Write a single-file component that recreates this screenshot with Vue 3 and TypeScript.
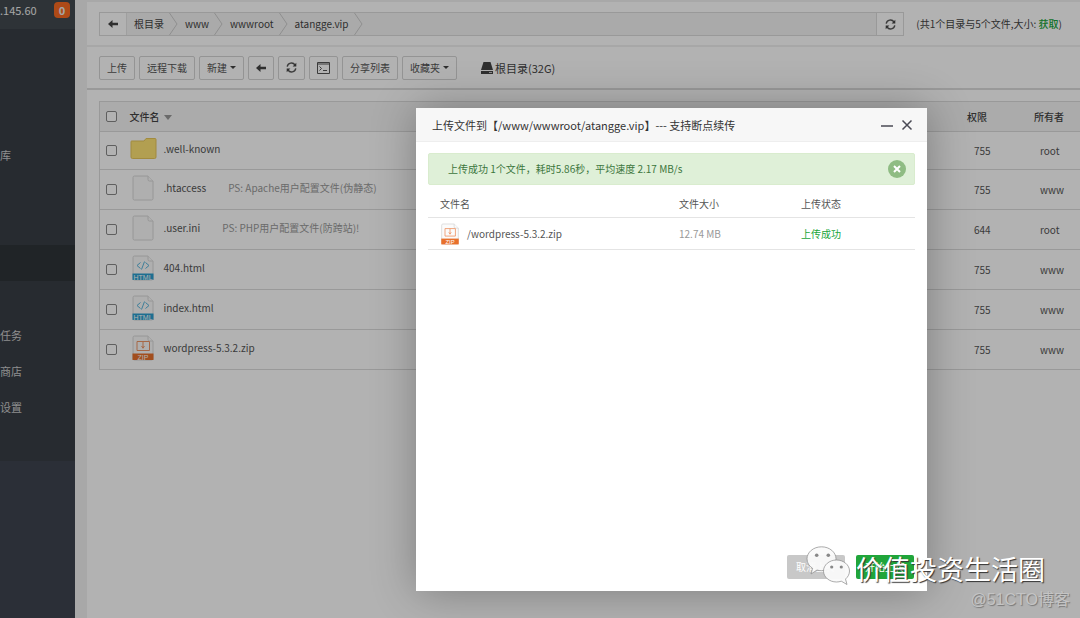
<script setup lang="ts">
import { ref } from 'vue'

type Kind = 'folder' | 'blank' | 'html' | 'zip'
interface Entry {
  name: string
  kind: Kind
  note?: string
  mode: string
  owner: string
}

const menu = ['', '', '', '库', '', '', '', '', '任务', '商店', '设置', '']
const activeItem = 6

const crumbs = ['根目录', 'www', 'wwwroot', 'atangge.vip']

const entries: Entry[] = [
  { name: '.well-known', kind: 'folder', mode: '755', owner: 'root' },
  { name: '.htaccess', kind: 'blank', note: 'PS: Apache用户配置文件(伪静态)', mode: '755', owner: 'www' },
  { name: '.user.ini', kind: 'blank', note: 'PS: PHP用户配置文件(防跨站)!', mode: '644', owner: 'root' },
  { name: '404.html', kind: 'html', mode: '755', owner: 'www' },
  { name: 'index.html', kind: 'html', mode: '755', owner: 'www' },
  { name: 'wordpress-5.3.2.zip', kind: 'zip', mode: '755', owner: 'www' },
]
const selected = ref<string[]>([])
</script>

<template>
  <div class="app">
    <aside class="sidebar">
      <div class="server"><span>.145.60</span><b class="badge">0</b></div>
      <nav class="menu">
        <a v-for="(item, i) in menu" :key="i" href="#" :class="{ active: i === activeItem }">{{ item }}</a>
      </nav>
    </aside>

    <main class="content">
      <div class="pathbar">
        <div class="path">
          <button class="path-btn back" aria-label="返回">
            <svg width="10" height="8" viewBox="0 0 10 8"><path d="M0 4 4.500 0v2.700H10v2.600H4.500V8z" /></svg>
          </button>
          <div class="crumbs">
            <a v-for="c in crumbs" :key="c" href="#">
              <span>{{ c }}</span>
              <svg width="9" height="22" viewBox="0 0 9 22"><path d="M.5 0 8 11 .5 22" /></svg>
            </a>
          </div>
          <button class="path-btn refresh" aria-label="刷新">
            <svg width="11" height="11" viewBox="0 0 11 11">
              <path class="arc" d="M1.200 4.600A4.300 4.300 0 0 1 9 3M9.800 6.400A4.300 4.300 0 0 1 2 8" />
              <path d="M10.300.7v3.700H6.600zM.7 10.300V6.600h3.700z" />
            </svg>
          </button>
        </div>
        <p class="summary">(共1个目录与5个文件,大小: <a href="#">获取</a>)</p>
      </div>

      <div class="toolbar">
        <button>上传</button>
        <button>远程下载</button>
        <button>新建<i class="caret"></i></button>
        <button aria-label="后退">
          <svg width="10" height="8" viewBox="0 0 10 8"><path d="M0 4 4.500 0v2.700H10v2.600H4.500V8z" /></svg>
        </button>
        <button aria-label="重新加载">
          <svg width="11" height="11" viewBox="0 0 11 11">
            <path class="arc" d="M1.200 4.600A4.300 4.300 0 0 1 9 3M9.800 6.400A4.300 4.300 0 0 1 2 8" />
            <path d="M10.300.7v3.700H6.600zM.7 10.300V6.600h3.700z" />
          </svg>
        </button>
        <button aria-label="终端">
          <svg width="13" height="12" viewBox="0 0 13 12">
            <path class="line" d="M.5.5h12v11H.5zM.5 2h12M2.500 4.500l2 2-2 2M6 8.500h4" />
          </svg>
        </button>
        <button>分享列表</button>
        <button>收藏夹<i class="caret"></i></button>
        <a class="disk" href="#">
          <svg width="12" height="12" viewBox="0 0 12 12">
            <path d="M2.500 0h7L12 8H0zM0 9h12v3H0z" />
            <path class="light" d="M8 10.500h3" />
          </svg>
          <span>根目录(32G)</span>
        </a>
      </div>

      <div class="files">
        <table>
          <thead>
            <tr>
              <th class="check"><input type="checkbox" aria-label="全选" /></th>
              <th>文件名<i class="sort"></i></th>
              <th class="mode">权限</th>
              <th class="owner">所有者</th>
            </tr>
          </thead>
          <tbody>
            <tr v-for="e in entries" :key="e.name">
              <td class="check"><input v-model="selected" type="checkbox" :value="e.name" :aria-label="e.name" /></td>
              <td>
                <div class="name">
                  <svg v-if="e.kind === 'folder'" width="28" height="26" viewBox="0 0 28 26">
                    <path class="folder" d="M1.500 5h12.500l2-2.500h9q1 0 1 1V21q0 1.500-1.500 1.500h-22Q1 22.500 1 21V6q0-1 .5-1z" />
                  </svg>
                  <svg v-else width="28" height="26" viewBox="0 0 28 26">
                    <path class="sheet" d="M4.500 1H18l5 5v17.500q0 1.500-1.500 1.500h-17Q3 25 3 23.500v-21Q3 1 4.500 1z" />
                    <path class="sheet" d="M18 1v3.500Q18 6 19.500 6H23" />
                    <template v-if="e.kind === 'html'">
                      <path class="code" d="M10.500 7.500 7 10.500l3.500 3M15.500 7.500l3.500 3-3.500 3M14.500 6.500l-3 8" />
                      <path class="blue" d="M2.500 18.500h21V25h-21z" />
                      <text x="13" y="24.500">HTML</text>
                    </template>
                    <template v-if="e.kind === 'zip'">
                      <path class="box" d="M7 6.500h12.500v9H7zM13 6.500v7M11.500 11l1.500 2 1.500-2" />
                      <path class="orange" d="M2.500 18.500h21V25h-21z" />
                      <text x="13" y="24.500">ZIP</text>
                    </template>
                  </svg>
                  <a href="#">{{ e.name }}</a>
                  <span v-if="e.note" class="note">{{ e.note }}</span>
                </div>
              </td>
              <td class="mode">{{ e.mode }}</td>
              <td class="owner">{{ e.owner }}</td>
            </tr>
          </tbody>
        </table>
      </div>
    </main>

    <div class="shade"></div>

    <section class="dialog" role="dialog" aria-label="上传文件">
      <header>
        <h2>上传文件到【/www/wwwroot/atangge.vip】--- 支持断点续传</h2>
        <button aria-label="最小化">
          <svg width="12" height="12" viewBox="0 0 12 12"><path d="M0 7h12" /></svg>
        </button>
        <button aria-label="关闭">
          <svg width="12" height="12" viewBox="0 0 12 12"><path d="m1.500 1.500 9 9M10.500 1.500l-9 9" /></svg>
        </button>
      </header>
      <div class="dialog-body">
        <div class="alert">
          <span>上传成功 1个文件，耗时5.86秒，平均速度 2.17 MB/s</span>
          <button aria-label="关闭提示">
            <svg width="18" height="18" viewBox="0 0 18 18">
              <circle cx="9" cy="9" r="9" /><path d="m6 6 6 6M12 6l-6 6" />
            </svg>
          </button>
        </div>
        <table class="uploads">
          <thead>
            <tr><th>文件名</th><th class="size">文件大小</th><th class="state">上传状态</th></tr>
          </thead>
          <tbody>
            <tr>
              <td>
                <div class="name">
                  <svg width="20" height="22" viewBox="1 0 24 26">
                    <path class="sheet" d="M4.500 1H18l5 5v17.500q0 1.500-1.500 1.500h-17Q3 25 3 23.500v-21Q3 1 4.500 1z" />
                    <path class="sheet" d="M18 1v3.500Q18 6 19.500 6H23" />
                    <path class="box" d="M7 6.500h12.500v9H7zM13 6.500v7M11.500 11l1.500 2 1.500-2" />
                    <path class="orange" d="M2.500 18.500h21V25.500h-21z" />
                    <text x="13" y="24.500">ZIP</text>
                  </svg>
                  <span>/wordpress-5.3.2.zip</span>
                </div>
              </td>
              <td class="size">12.74 MB</td>
              <td class="state">上传成功</td>
            </tr>
          </tbody>
        </table>
      </div>
      <footer>
        <button class="cancel">取消上传</button>
        <button class="start">开始上传</button>
      </footer>
    </section>

    <div class="marks">
      <div class="channel">
        <svg width="46" height="46" viewBox="0 0 46 46">
          <path class="bubble" d="M15.500.8C7.500.8 1 6.200 1 12.800c0 4 2.200 7.400 5.600 9.500L5 28l6-4c1.500.5 3 .7 4.500.7 8 0 14.500-5.300 14.500-11.900S23.500.8 15.500.8z" />
          <path class="bubble" d="M30.500 14C23.300 14 17.500 19 17.500 25s5.800 11 13 11c1.700 0 3.300-.3 4.800-.8l5.700 3.300-1.500-5.500c2.500-2 4-4.900 4-8 0-6-5.800-11-13-11z" />
          <g class="eyes">
            <circle cx="10.700" cy="9.300" r="1.800" /><circle cx="22.300" cy="9.300" r="1.800" />
            <circle cx="25.700" cy="21" r="1.600" /><circle cx="35.300" cy="21" r="1.600" />
          </g>
        </svg>
        <span>价值投资生活圈</span>
      </div>
      <div class="site">@51CTO博客</div>
    </div>
  </div>
</template>

<style>
body {
  overflow: hidden;
}
</style>

<style scoped>
.app {
  position: relative;
  display: flex;
  min-height: 100vh;
  overflow: hidden;
  background: #f1f1f1;
  color: #555;
  font: 10px/16px "Noto Sans CJK SC", sans-serif;
}
.app *,
.app {
  box-sizing: border-box;
}
a {
  color: inherit;
  text-decoration: none;
}
button {
  display: inline-flex;
  align-items: center;
  justify-content: center;
  margin: 0;
  padding: 0;
  border: 0;
  background: none;
  color: inherit;
  font: inherit;
  white-space: nowrap;
}
svg {
  display: block;
  flex: none;
  fill: #444;
}
.sidebar {
  flex: 0 0 75px;
  background: #3e4450;
  color: #ccc;
}
.server {
  display: flex;
  align-items: center;
  justify-content: space-between;
  height: 29px;
  padding: 0 5px 10px 0;
  background: #424a4f;
  color: #eee;
  font-size: 11px;
}
.badge {
  width: 16px;
  border-radius: 4px;
  background: #fa6a21;
  text-align: center;
}
.menu {
  display: flex;
  flex-direction: column;
  background: #383e46;
}
.menu a {
  height: 36px;
  font-size: 11px;
  line-height: 36px;
}
.menu a.active {
  background: #2f3438;
}
.content {
  flex: 1;
  min-width: 0;
  margin: 2px 0 0 12px;
  background: #fff;
}
.pathbar {
  display: flex;
  align-items: center;
  gap: 12px;
  height: 45px;
  padding: 1px 18px 0 12px;
  border-bottom: 2px solid #f0f0f0;
}
.path {
  display: flex;
  flex: 1;
  height: 24px;
  border: 1px solid #dcdcdc;
  background: #f4f4f4;
}
.path-btn {
  width: 27px;
  background: #fff;
}
.back {
  border-right: 1px solid #e4e4e4;
}
.refresh {
  border-left: 1px solid #dcdcdc;
}
.crumbs {
  display: flex;
  flex: 1;
  color: #444;
}
.crumbs a {
  display: flex;
  align-items: center;
  gap: 5px;
  padding-left: 7px;
}
.crumbs svg,
.arc,
.line {
  fill: none;
  stroke: #ccc;
}
.arc {
  stroke: #555;
  stroke-width: 1.4;
}
.line {
  stroke: #555;
}
.summary {
  margin: 0;
  white-space: nowrap;
  color: #444;
}
.summary a {
  color: #20a53a;
  font-weight: 500;
}
.toolbar {
  display: flex;
  align-items: center;
  gap: 4px;
  height: 43px;
  padding: 0 12px;
  border-bottom: 2px solid #dcdcdc;
}
.toolbar button {
  height: 24px;
  padding: 0 7px;
  border: 1px solid #d4d4d4;
  border-radius: 2px;
}
.caret {
  margin-left: 3px;
  border: 3px solid transparent;
  border-top-color: #444;
  border-bottom: 0;
}
.disk {
  display: flex;
  align-items: center;
  gap: 2px;
  margin-left: 20px;
  color: #444;
  font-size: 11px;
}
.light {
  stroke: #ccc;
}
.files {
  padding: 11px 0 0 12px;
}
table {
  width: 100%;
  border-collapse: collapse;
}
th,
td {
  padding: 0;
  text-align: left;
  font-weight: 400;
}
.files table {
  border: 1px solid #dcdcdc;
  border-right: 0;
}
.files tr {
  height: 40px;
  border-bottom: 1px solid #dcdcdc;
}
.files thead tr {
  height: 30px;
  background: #f5f5f5;
  color: #444;
}
.files tbody tr:first-child {
  height: 38px;
}
.files th {
  font-weight: 500;
}
.files .check {
  width: 30px;
  padding-left: 6px;
}
input {
  display: block;
  width: 11px;
  height: 11px;
  margin: 0;
  appearance: none;
  border: 1px solid #888;
  border-radius: 2px;
  background: #fff;
}
.sort {
  display: inline-block;
  margin-left: 4px;
  border: 4px solid transparent;
  border-top: 5px solid #999;
  border-bottom: 0;
  vertical-align: 1px;
}
.files .mode {
  width: 67px;
}
.files .owner {
  width: 46px;
}
.files td.mode {
  padding-left: 7px;
}
.files td.owner {
  padding-left: 6px;
}
.name {
  display: flex;
  align-items: center;
  gap: 6px;
}
.files .name {
  padding-bottom: 3px;
}
.note {
  margin-left: 16px;
  color: #999;
}
.folder {
  fill: #ffe475;
  stroke: #e8c75a;
}
.sheet {
  fill: #fbfbfb;
  stroke: #d8d8d8;
}
.code,
.box {
  fill: none;
  stroke: #58b5dc;
}
.box {
  stroke: #ee9465;
}
.blue {
  fill: #2c9fd0;
}
.orange {
  fill: #e8702c;
}
svg text {
  fill: #fff;
  font: 7px "Liberation Sans", sans-serif;
  text-anchor: middle;
}
.shade {
  position: absolute;
  inset: 0;
  background: rgba(0, 0, 0, 0.3);
}
.dialog {
  position: absolute;
  top: 108px;
  left: 416px;
  display: flex;
  flex-direction: column;
  width: 511px;
  height: 483px;
  background: #fff;
  box-shadow: 1px 1px 42px rgba(0, 0, 0, 0.3);
}
.dialog header {
  display: flex;
  align-items: center;
  gap: 8px;
  height: 34px;
  padding: 0 14px 0 16px;
  border-bottom: 1px solid #eee;
  background: #f7f7f7;
}
h2 {
  flex: 1;
  margin: 0;
  color: #333;
  font-size: 11px;
  font-weight: 400;
}
header svg {
  fill: none;
  stroke: #4a4a55;
  stroke-width: 1.5;
}
.dialog-body {
  flex: 1;
  padding: 11px 12px;
}
.alert {
  display: flex;
  align-items: center;
  justify-content: space-between;
  height: 32px;
  padding: 0 8px 0 19px;
  border: 1px solid #d9ecce;
  border-radius: 2px;
  background: #dff0d8;
  color: #3c763d;
}
.alert circle {
  fill: #8fbc83;
}
.alert path {
  fill: none;
  stroke: #fff;
  stroke-width: 2;
}
.uploads tr {
  height: 32px;
  border-bottom: 1px solid #e4e4e4;
}
.uploads th {
  padding-top: 7px;
}
.uploads td {
  padding-top: 2px;
}
.uploads th:first-child,
.uploads td:first-child {
  padding-left: 12px;
}
.uploads .name {
  gap: 7px;
}
.uploads .size {
  width: 122px;
}
.uploads td.size {
  color: #999;
}
.uploads .state {
  width: 114px;
}
.uploads td.state {
  color: #20a53a;
}
.dialog footer {
  display: flex;
  justify-content: flex-end;
  gap: 11px;
  padding: 12px 13px;
}
footer button {
  width: 58px;
  height: 24px;
  border-radius: 2px;
  color: #fff;
}
.cancel {
  background: #c8c8c8;
}
.start {
  background: #20a53a;
}
.marks {
  position: absolute;
  right: 10px;
  bottom: 8px;
  display: flex;
  flex-direction: column;
  align-items: flex-end;
  gap: 1px;
}
.channel {
  display: flex;
  align-items: center;
  gap: 4px;
  height: 40px;
  margin-right: 25px;
  color: #fff;
  font-size: 27px;
  line-height: 40px;
  text-shadow: 1px 1px 1px #333;
}
.bubble {
  fill: rgba(250, 250, 250, 0.95);
  stroke: #888;
  stroke-width: 0.7;
}
.eyes {
  fill: #888;
}
.site {
  color: #c4c4c4;
  font: 16px/20px "Liberation Sans", "Noto Sans CJK SC", sans-serif;
  text-shadow: 1px 1px 1px #777;
}
</style>
